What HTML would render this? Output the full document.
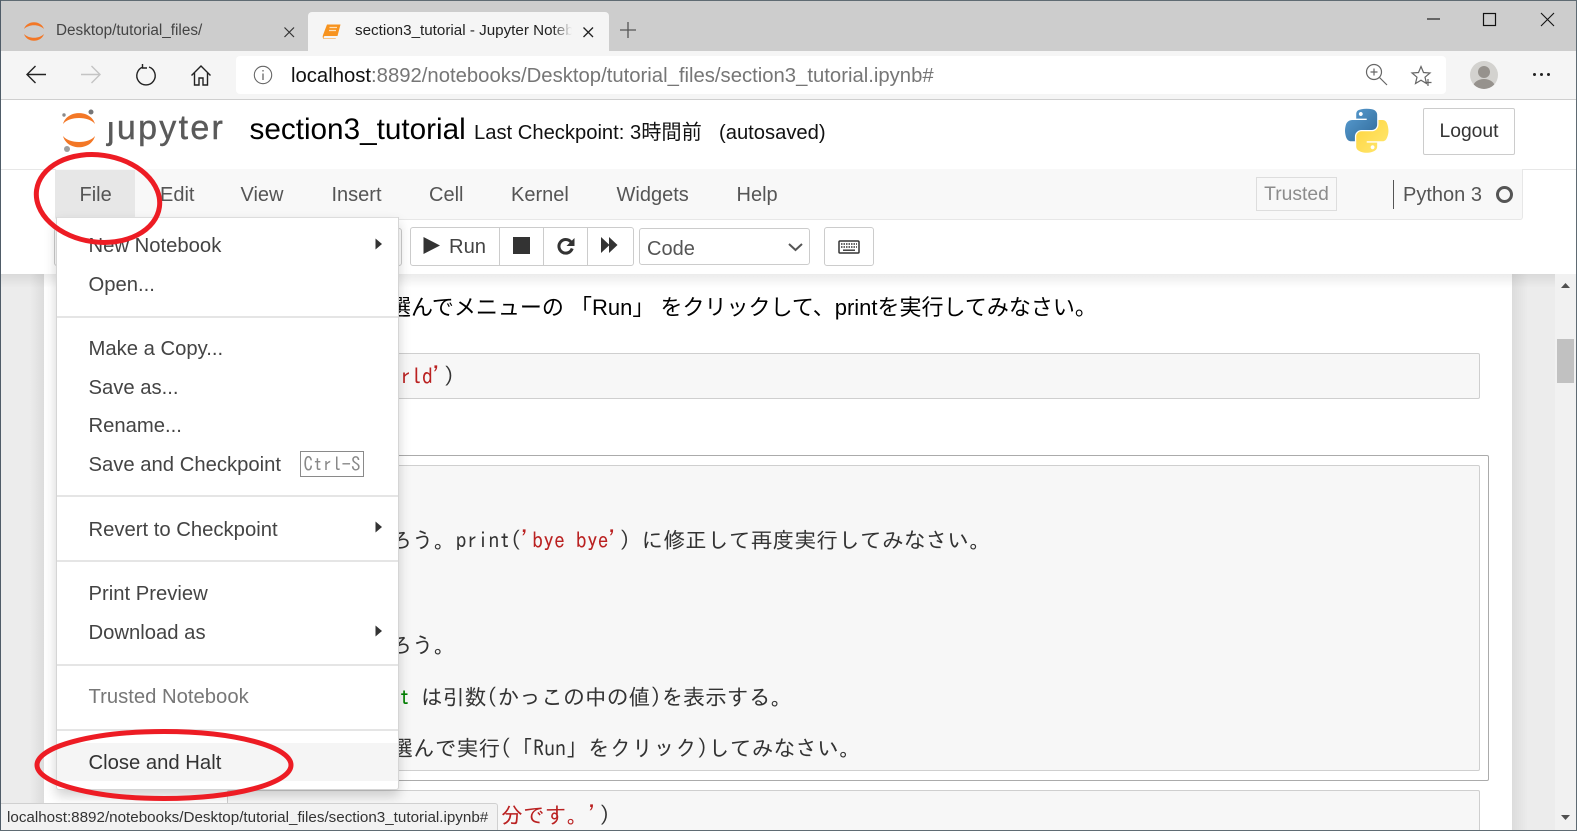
<!DOCTYPE html>
<html lang="ja"><head><meta charset="utf-8"><title>section3_tutorial - Jupyter Notebook</title>
<style>
html,body{margin:0;padding:0;width:1577px;height:831px;overflow:hidden;background:#ececec}
body{position:relative;font-family:"Liberation Sans","Noto Sans CJK JP",sans-serif;color:#333}
div,span.a,svg.a{position:absolute}
svg{overflow:visible}
.t{position:absolute;white-space:pre;line-height:30px;height:30px}
.m{font-size:20.250px;color:#444;left:88.500px}
.nav{font-size:20px;color:#555;top:180px}
.c{font-family:"IPAGothic","Liberation Mono",monospace;font-size:21.860px;color:#333}
.cell{background:#f7f7f7;border:1px solid #cfcfcf;border-radius:2px;box-sizing:border-box}
.sep{left:57px;width:341px;height:2px;background:#e5e5e5}
.btn{border:1px solid #ccc;border-radius:3px;box-sizing:border-box;background:#fff}
</style></head><body>

<!-- page bg + notebook -->
<div style="left:0;top:274px;width:1577px;height:557px;background:#ececec"></div>
<div style="left:1555px;top:274px;width:21px;height:557px;background:#f1f1f1"></div>
<div style="left:1512px;top:274px;width:16px;height:557px;background:linear-gradient(90deg,#dcdcdc,#ececec)"></div>
<div style="left:30px;top:274px;width:14px;height:557px;background:linear-gradient(90deg,#ececec,#dcdcdc)"></div>
<div style="left:44px;top:274px;width:1468px;height:557px;background:#fff"></div>
<div style="left:0;top:274px;width:1555px;height:14px;background:linear-gradient(180deg,rgba(0,0,0,.08),rgba(0,0,0,0))"></div>

<!-- scrollbar -->
<div style="left:1557px;top:339px;width:17px;height:44px;background:#c1c1c1"></div>
<svg class="a" style="left:1560px;top:282px" width="12" height="8"><path d="M1 6 L5.500 1 L10 6Z" fill="#505050"/></svg>
<svg class="a" style="left:1560px;top:814px" width="12" height="8"><path d="M1 1 L5.500 6 L10 1Z" fill="#505050"/></svg>

<!-- cells -->
<span class="t" style="left:389px;top:293px;font-size:22px;color:#000">選んでメニューの 「Run」 をクリックして、printを実行してみなさい。</span>
<div class="cell" style="left:227px;top:353px;width:1253px;height:46px"></div>
<span class="t c" style="left:400px;top:361px"><span style="color:#ba2121">rld'</span>)</span>
<div style="left:227px;top:455px;width:1262px;height:326px;border:1px solid #ababab;border-radius:2px;box-sizing:border-box;background:#fff"></div>
<div class="cell" style="left:227px;top:465px;width:1253px;height:306px"></div>
<span class="t c" style="left:390px;top:525px">ろう。print(<span style="color:#ba2121">'bye bye'</span>) に修正して再度実行してみなさい。</span>
<span class="t c" style="left:390px;top:630px">ろう。</span>
<span class="t c" style="left:399px;top:682px"><span style="color:#008000">t</span> は引数(かっこの中の値)を表示する。</span>
<span class="t c" style="left:391px;top:733px">選んで実行( ｢Run｣ をクリック)してみなさい。</span>
<div class="cell" style="left:227px;top:790px;width:1253px;height:60px"></div>
<span class="t c" style="left:501px;top:800px"><span style="color:#ba2121">分です。'</span>)</span>

<!-- header -->
<div style="left:0;top:99px;width:1577px;height:175px;background:#fff"></div>
<div style="left:0;top:169px;width:1577px;height:1px;background:#e7e7e7"></div>
<svg class="a" style="left:63px;top:110px" width="36" height="46" viewBox="0 0 36 46">
<path d="M0 14 C4 -0.500 28 -0.500 32 14 C26 6 6 6 0 14Z" fill="#f37726"/>
<path d="M0 26 C4 41 28 41 32 26 C26 34 6 34 0 26Z" fill="#f37726"/>
<circle cx="28" cy="2" r="2.500" fill="#767677"/><circle cx="1" cy="5" r="1.700" fill="#8a8a8a"/><circle cx="4" cy="39" r="3" fill="#9e9e9e"/>
</svg>
<span class="t" style="left:107px;top:110px;font-size:34px;line-height:36px;height:36px;color:#5a5a5a;letter-spacing:2.300px;-webkit-text-stroke:.4px #5a5a5a">jupyter</span>
<div style="left:104px;top:111px;width:14px;height:11px;background:#fff"></div>
<span class="t" style="left:249.500px;top:115px;font-size:29.700px;color:#000">section3_tutorial</span>
<span class="t" style="left:474px;top:118px;font-size:20.200px;color:#111">Last Checkpoint: 3時間前</span>
<span class="t" style="left:719px;top:118px;font-size:20.200px;color:#111">(autosaved)</span>
<svg class="a" style="left:1345px;top:108px" width="43" height="45" viewBox="0 0 110 111">
<defs>
<linearGradient id="pb" x1="0" y1="0" x2="1" y2="1"><stop offset="0" stop-color="#5a9fd4"/><stop offset="1" stop-color="#306998"/></linearGradient>
<linearGradient id="py" x1="0" y1="0" x2="1" y2="1"><stop offset="0" stop-color="#ffd43b"/><stop offset="1" stop-color="#ffe873"/></linearGradient>
</defs>
<path fill="url(#pb)" d="M54.919 0.001c-4.584.022-8.961.413-12.812 1.095C30.76 3.099 28.7 7.295 28.7 15.032V25.25h26.813v3.406H18.638c-7.793 0-14.616 4.684-16.75 13.594-2.462 10.213-2.571 16.586 0 27.25 1.906 7.938 6.458 13.594 14.25 13.594h9.219v-12.25c0-8.85 7.657-16.656 16.75-16.656h26.781c7.455 0 13.406-6.138 13.406-13.625V15.032c0-7.266-6.13-12.725-13.406-13.937C64.282.328 59.502-.02 54.919.001zM40.419 8.22c2.77 0 5.031 2.299 5.031 5.125 0 2.816-2.262 5.094-5.031 5.094-2.78 0-5.031-2.278-5.031-5.094 0-2.826 2.252-5.125 5.031-5.125z"/>
<path fill="url(#py)" d="M85.638 28.657v11.906c0 9.231-7.826 17-16.75 17H42.106c-7.336 0-13.406 6.279-13.406 13.625v25.531c0 7.266 6.319 11.54 13.406 13.625 8.487 2.496 16.626 2.947 26.781 0 6.75-1.954 13.406-5.888 13.406-13.625V86.5H55.513v-3.406H95.7c7.793 0 10.696-5.436 13.406-13.594 2.799-8.399 2.68-16.476 0-27.25-1.926-7.757-5.604-13.594-13.406-13.594zM70.575 93.313c2.78 0 5.031 2.278 5.031 5.094 0 2.826-2.252 5.125-5.031 5.125-2.77 0-5.031-2.299-5.031-5.125 0-2.816 2.262-5.094 5.031-5.094z"/>
</svg>
<div class="btn" style="left:1423px;top:108px;width:92px;height:47px;border-radius:2px;font-size:19.300px;line-height:46px;text-align:center;color:#333">Logout</div>

<!-- menubar -->
<div style="left:55px;top:169px;width:1468px;height:51px;box-sizing:border-box;background:#f8f8f8;border:1px solid #e7e7e7;border-top:none;border-radius:0 0 3px 3px"></div>
<div style="left:56px;top:170px;width:79px;height:49px;background:#e7e7e7"></div>
<span class="t nav" style="left:79.500px">File</span>
<span class="t nav" style="left:160px">Edit</span>
<span class="t nav" style="left:240.500px">View</span>
<span class="t nav" style="left:331.500px">Insert</span>
<span class="t nav" style="left:429px">Cell</span>
<span class="t nav" style="left:511px">Kernel</span>
<span class="t nav" style="left:616.500px">Widgets</span>
<span class="t nav" style="left:736.500px">Help</span>
<div style="left:1256px;top:177px;width:81px;height:34px;box-sizing:border-box;border:1px solid #ddd;font-size:19.300px;line-height:34px;text-align:center;color:#8c8c8c">Trusted</div>
<div style="left:1393px;top:180px;width:1px;height:29px;background:#555"></div>
<span class="t nav" style="left:1403px">Python 3</span>
<div style="left:1496px;top:186px;width:17px;height:17px;box-sizing:border-box;border:3px solid #555;border-radius:50%"></div>

<!-- toolbar -->
<div class="btn" style="left:54px;top:228px;width:348px;height:38px"></div>
<div class="btn" style="left:410px;top:227px;width:224px;height:39px"></div>
<div style="left:499px;top:227px;width:1px;height:39px;background:#ccc"></div>
<div style="left:543px;top:227px;width:1px;height:39px;background:#ccc"></div>
<div style="left:587px;top:227px;width:1px;height:39px;background:#ccc"></div>
<svg class="a" style="left:423px;top:237px" width="18" height="18"><path d="M0.500 0 L17 8.500 L0.500 17Z" fill="#333"/></svg>
<span class="t" style="left:449px;top:232px;font-size:20.200px;color:#444">Run</span>
<div style="left:513px;top:237px;width:17px;height:17px;background:#333"></div>
<svg class="a" style="left:556px;top:236px" width="20" height="20" viewBox="0 0 20 20"><path d="M15 6 A6.800 6.800 0 1 0 16.200 12.500" fill="none" stroke="#333" stroke-width="3"/><path d="M18.500 2 V10 H10.500Z" fill="#333"/></svg>
<svg class="a" style="left:601px;top:237px" width="17" height="17"><path d="M0 0 L8.500 8 L0 16Z M8 0 L16.500 8 L8 16Z" fill="#333"/></svg>
<div class="btn" style="left:639px;top:228px;width:171px;height:37px;font-size:20px;line-height:41px;padding-left:7px;color:#555">Code</div>
<svg class="a" style="left:788px;top:243px" width="15" height="9"><path d="M1 1 L7.500 7 L14 1" fill="none" stroke="#555" stroke-width="2"/></svg>
<div class="btn" style="left:824px;top:227px;width:50px;height:39px"></div>
<svg class="a" style="left:838px;top:240px" width="22" height="14" viewBox="0 0 22 14"><rect x="1" y="1" width="20" height="12" rx="1" fill="#fff" stroke="#333" stroke-width="1.500"/><path d="M3 4 H19 M3 7 H19" stroke="#333" stroke-width="1.400" stroke-dasharray="1.500 1"/><path d="M5 10.200 H17" stroke="#333" stroke-width="1.400"/></svg>

<!-- file menu -->
<div style="left:56px;top:217px;width:343px;height:573px;box-sizing:border-box;background:#fff;border:1px solid #d5d5d5;border-top-color:#ddd;border-radius:0 0 3px 3px;box-shadow:0 6px 12px rgba(0,0,0,.18)"></div>
<span class="t m" style="top:231px">New Notebook</span>
<span class="t m" style="top:270px">Open...</span>
<div class="sep" style="top:316px;height:1.500px"></div>
<span class="t m" style="top:334px">Make a Copy...</span>
<span class="t m" style="top:373px">Save as...</span>
<span class="t m" style="top:411px">Rename...</span>
<span class="t m" style="top:450px">Save and Checkpoint</span>
<div style="left:300px;top:451px;width:64px;height:26px;box-sizing:border-box;border:1px solid #8a8a8a;background:#fff;font-family:'IPAGothic',monospace;font-size:19px;line-height:25px;text-align:center;color:#888">Ctrl-S</div>
<div class="sep" style="top:495px"></div>
<span class="t m" style="top:515px">Revert to Checkpoint</span>
<div class="sep" style="top:560px"></div>
<span class="t m" style="top:579px">Print Preview</span>
<span class="t m" style="top:618px">Download as</span>
<div class="sep" style="top:664px"></div>
<span class="t m" style="top:682px;color:#777">Trusted Notebook</span>
<div class="sep" style="top:729px"></div>
<div style="left:57px;top:743px;width:341px;height:38px;background:#f5f5f5"></div>
<span class="t m" style="top:748px;color:#333">Close and Halt</span>
<svg class="a" style="left:375px;top:238px" width="8" height="12"><path d="M0.500 0.500 L7 6 L0.500 11.500Z" fill="#333"/></svg>
<svg class="a" style="left:375px;top:521px" width="8" height="12"><path d="M0.500 0.500 L7 6 L0.500 11.500Z" fill="#333"/></svg>
<svg class="a" style="left:375px;top:625px" width="8" height="12"><path d="M0.500 0.500 L7 6 L0.500 11.500Z" fill="#333"/></svg>

<!-- status bubble -->
<div style="left:1px;top:803px;width:497px;height:27px;box-sizing:border-box;background:#f2f2f2;border:1px solid #d0d0d0;border-left:none;border-bottom:none;border-radius:0 3px 0 0;font-size:15.200px;line-height:27px;padding-left:6px;color:#333;white-space:pre">localhost:8892/notebooks/Desktop/tutorial_files/section3_tutorial.ipynb#</div>

<!-- red ellipses -->
<svg class="a" style="left:0;top:0;pointer-events:none" width="1577" height="831">
<ellipse cx="98" cy="198.500" rx="62" ry="43.500" fill="none" stroke="#ed1c24" stroke-width="5" transform="rotate(8 98 198.500)"/>
<ellipse cx="164" cy="765" rx="127" ry="33.500" fill="none" stroke="#ed1c24" stroke-width="5"/>
</svg>

<!-- browser chrome -->
<div style="left:0;top:0;width:1577px;height:51px;background:#cdcdcd"></div>
<div style="left:0;top:51px;width:1577px;height:48px;background:#f5f5f5"></div>
<div style="left:0;top:99px;width:1577px;height:1px;background:#cfcfcf"></div>
<div style="left:308px;top:12px;width:301px;height:39px;background:#f5f5f5;border-radius:4px 4px 0 0"></div>
<svg class="a" style="left:24px;top:21px" width="20" height="20" viewBox="0 0 20 20"><path d="M0 8 C3 -1 17 -1 20 8 C15 3 5 3 0 8Z M0 13 C3 22 17 22 20 13 C15 18 5 18 0 13Z" fill="#f37726"/></svg>
<span class="t" style="left:56px;top:16px;font-size:15.300px;color:#444">Desktop/tutorial_files/</span>
<svg class="a" style="left:284px;top:27px" width="11" height="11"><path d="M0.500 0.500 L10 10 M10 0.500 L0.500 10" stroke="#333" stroke-width="1.200"/></svg>
<svg class="a" style="left:323px;top:24px" width="18" height="15" viewBox="0 0 18 15"><path d="M4 0.500 H17.500 L14.500 12 H1.500 L0.500 13 L1 14.500 H13 L12.500 15 H1 Q-1 14 0 11Z" fill="#f7931e"/><path d="M6.500 3.500 H14 M6 6.500 H13" stroke="#fde0b8" stroke-width="1.200"/></svg>
<div style="left:355px;top:16px;width:217px;height:30px;overflow:hidden"><span class="t" style="left:0;top:0;font-size:15.200px;color:#222">section3_tutorial - Jupyter Notebook</span></div>
<div style="left:552px;top:16px;width:20px;height:30px;background:linear-gradient(90deg,rgba(245,245,245,0),#f5f5f5)"></div>
<svg class="a" style="left:583px;top:27px" width="11" height="11"><path d="M0.500 0.500 L10 10 M10 0.500 L0.500 10" stroke="#222" stroke-width="1.300"/></svg>
<svg class="a" style="left:620px;top:22px" width="16" height="16"><path d="M8 0 V16 M0 8 H16" stroke="#555" stroke-width="1.300"/></svg>
<svg class="a" style="left:1427px;top:12px" width="135" height="16"><path d="M0 7 H13" stroke="#111" stroke-width="1.100"/><rect x="56.500" y="1.500" width="12" height="12" fill="none" stroke="#111" stroke-width="1.200"/><path d="M114 1 L127 14 M127 1 L114 14" stroke="#111" stroke-width="1.100"/></svg>

<svg class="a" style="left:25px;top:64px" width="22" height="22"><path d="M21 10.500 H2 M10.500 2 L2 10.500 L10.500 19" fill="none" stroke="#222" stroke-width="1.400"/></svg>
<svg class="a" style="left:80px;top:64px" width="22" height="22"><path d="M1 10.500 H20 M11.500 2 L20 10.500 L11.500 19" fill="none" stroke="#c4c4c4" stroke-width="1.400"/></svg>
<svg class="a" style="left:135px;top:64px" width="22" height="22"><path d="M8 3 A9.200 9.200 0 1 0 14 3" fill="none" stroke="#222" stroke-width="1.400"/><path d="M7.500 0 V4 H12" fill="none" stroke="#222" stroke-width="1.400"/></svg>
<svg class="a" style="left:191px;top:65px" width="20" height="21"><path d="M0.500 10.500 L10 1 L19.500 10.500 M3.500 8 V20 H8 V13 H12 V20 H16.500 V8" fill="none" stroke="#222" stroke-width="1.400"/></svg>
<div style="left:236px;top:56px;width:1210px;height:38px;background:#fff;border-radius:4px"></div>
<svg class="a" style="left:253px;top:65px" width="20" height="20"><circle cx="10" cy="10" r="8.700" fill="none" stroke="#666" stroke-width="1.100"/><path d="M10 8.500 V15 M10 5 V6.500" stroke="#666" stroke-width="1.300"/></svg>
<span class="t" style="left:291px;top:61px;font-size:20.300px;color:#767676"><span style="color:#111">localhost</span>:8892/notebooks/Desktop/tutorial_files/section3_tutorial.ipynb#</span>
<svg class="a" style="left:1365px;top:63px" width="23" height="23"><circle cx="9" cy="9" r="7.500" fill="none" stroke="#666" stroke-width="1.200"/><path d="M14.500 14.500 L22 22 M9 5.500 V12.500 M5.500 9 H12.500" stroke="#666" stroke-width="1.200"/></svg>
<svg class="a" style="left:1411px;top:65px" width="22" height="21"><path d="M10 1.500 L12.500 7.500 L19 8 L14 12.200 L15.500 18.500 L10 15.200 L4.500 18.500 L6 12.200 L1 8 L7.500 7.500Z" fill="none" stroke="#666" stroke-width="1.200"/><path d="M17 14 V21 M13.500 17.500 H20.500" stroke="#666" stroke-width="1.200" /></svg>
<div style="left:1470px;top:61px;width:28px;height:28px;border-radius:50%;background:#d3d2cf;overflow:hidden"><div style="left:8px;top:5px;width:12px;height:12px;border-radius:50%;background:#96928d"></div><div style="left:3px;top:18px;width:22px;height:16px;border-radius:50%;background:#96928d"></div></div>
<div style="left:1533px;top:73px;width:3px;height:3px;border-radius:50%;background:#222"></div>
<div style="left:1540px;top:73px;width:3px;height:3px;border-radius:50%;background:#222"></div>
<div style="left:1547px;top:73px;width:3px;height:3px;border-radius:50%;background:#222"></div>

<!-- window frame -->
<div style="left:0;top:0;width:1577px;height:1px;background:#5f6b73"></div>
<div style="left:0;top:0;width:1px;height:831px;background:#4f5c68"></div>
<div style="left:1576px;top:0;width:1px;height:831px;background:#5f6b73"></div>
<div style="left:0;top:830px;width:1577px;height:1px;background:#5f6b73"></div>
</body></html>
